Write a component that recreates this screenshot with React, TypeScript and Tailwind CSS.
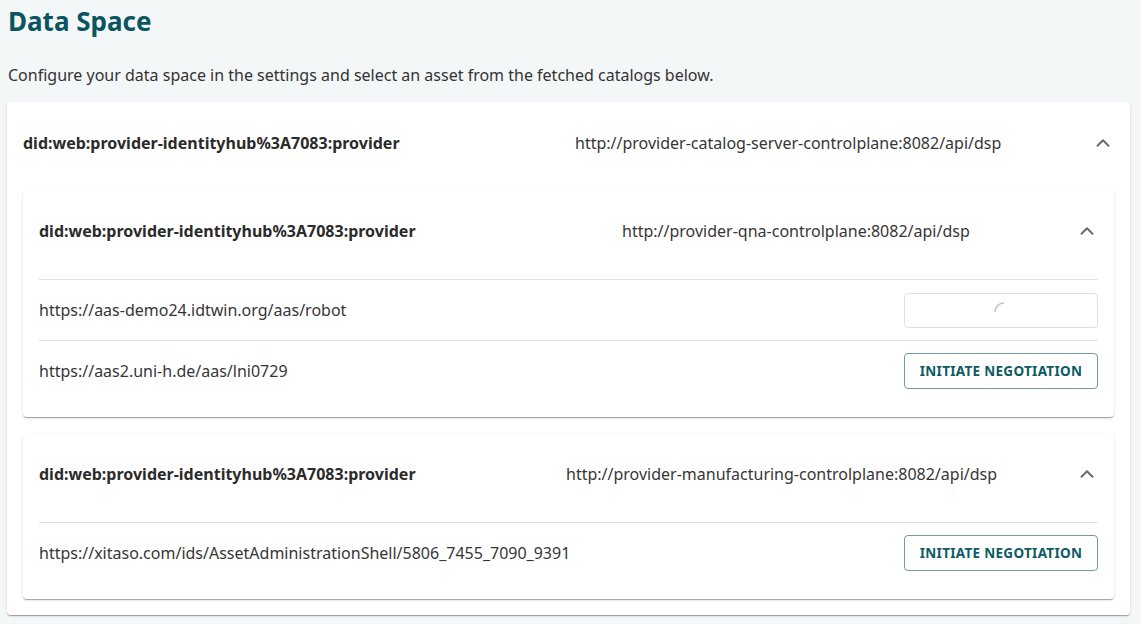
import { ChevronUp } from "lucide-react";

type Asset = { url: string; loading?: boolean };

type Catalog = {
  did: string;
  endpoint: string;
  urlOffset: string;
  assets: Asset[];
};

const catalogs: Catalog[] = [
  {
    did: "did:web:provider-identityhub%3A7083:provider",
    endpoint: "http://provider-qna-controlplane:8082/api/dsp",
    urlOffset: "w-[583px]",
    assets: [
      { url: "https://aas-demo24.idtwin.org/aas/robot", loading: true },
      { url: "https://aas2.uni-h.de/aas/lni0729" },
    ],
  },
  {
    did: "did:web:provider-identityhub%3A7083:provider",
    endpoint: "http://provider-manufacturing-controlplane:8082/api/dsp",
    urlOffset: "w-[527px]",
    assets: [
      { url: "https://xitaso.com/ids/AssetAdministrationShell/5806_7455_7090_9391" },
    ],
  },
];

const cardShadow =
  "shadow-[0_2px_1px_-1px_rgba(0,0,0,0.2),0_1px_1px_0_rgba(0,0,0,0.14),0_1px_3px_0_rgba(0,0,0,0.12)]";

function Spinner() {
  return (
    <svg width="22" height="22" viewBox="0 0 22 22" className="ml-[6px] mt-[3px]">
      <path d="M2 11 A9 9 0 0 1 11 2" fill="none" stroke="#c4c4c4" strokeWidth="1.6" />
    </svg>
  );
}

function AssetRow({ asset }: { asset: Asset }) {
  return (
    <div className="flex h-[60px] items-center justify-between">
      <span className="text-base text-[#363636]">{asset.url}</span>
      {asset.loading ? (
        <div className="flex h-[35px] w-[194px] items-center justify-center rounded border border-[#e0e0e0]">
          <Spinner />
        </div>
      ) : (
        <button className="h-9 w-[194px] rounded border border-[#0d5b63]/60 text-[13.5px] font-bold tracking-[0.3px] text-[#0d5b63]">
          INITIATE NEGOTIATION
        </button>
      )}
    </div>
  );
}

function CatalogCard({ catalog }: { catalog: Catalog }) {
  return (
    <div className={`rounded bg-white ${cardShadow}`}>
      <div className="flex h-20 items-center px-4">
        <div className={`${catalog.urlOffset} shrink-0 text-base font-bold text-[#2b2b2b]`}>
          {catalog.did}
        </div>
        <div className="flex-1 text-base text-[#363636]">{catalog.endpoint}</div>
        <ChevronUp size={22} strokeWidth={2.2} className="text-[#6b6b6b]" />
      </div>
      <div className="px-4 pb-4 pt-2">
        {catalog.assets.map((a) => (
          <div key={a.url} className="border-t border-[#e2e2e2]">
            <AssetRow asset={a} />
          </div>
        ))}
      </div>
    </div>
  );
}

export default function App() {
  return (
    <div className="min-h-screen bg-[#f4f7f8] pl-[7px] pr-[11px] font-['Noto_Sans',sans-serif]">
      <h1 className="pl-px pt-[5px] text-[26px] font-bold leading-[32px] text-[#0b5560]">Data Space</h1>
      <p className="mt-[27px] pl-px text-base leading-[22px] text-[#333]">
        Configure your data space in the settings and select an asset from the fetched catalogs below.
      </p>

      {/* outer catalog server */}
      <div className={`mt-4 rounded bg-white ${cardShadow}`}>
        <div className="flex h-[82px] items-center px-4">
          <div className="w-[552px] shrink-0 text-base font-bold text-[#2b2b2b]">
            did:web:provider-identityhub%3A7083:provider
          </div>
          <div className="flex-1 text-base text-[#363636]">
            http://provider-catalog-server-controlplane:8082/api/dsp
          </div>
          <ChevronUp size={22} strokeWidth={2.2} className="text-[#6b6b6b]" />
        </div>
        <div className="flex flex-col gap-[17px] px-4 pb-4 pt-[7px]">
          {catalogs.map((c) => (
            <CatalogCard key={c.endpoint} catalog={c} />
          ))}
        </div>
      </div>
    </div>
  );
}
